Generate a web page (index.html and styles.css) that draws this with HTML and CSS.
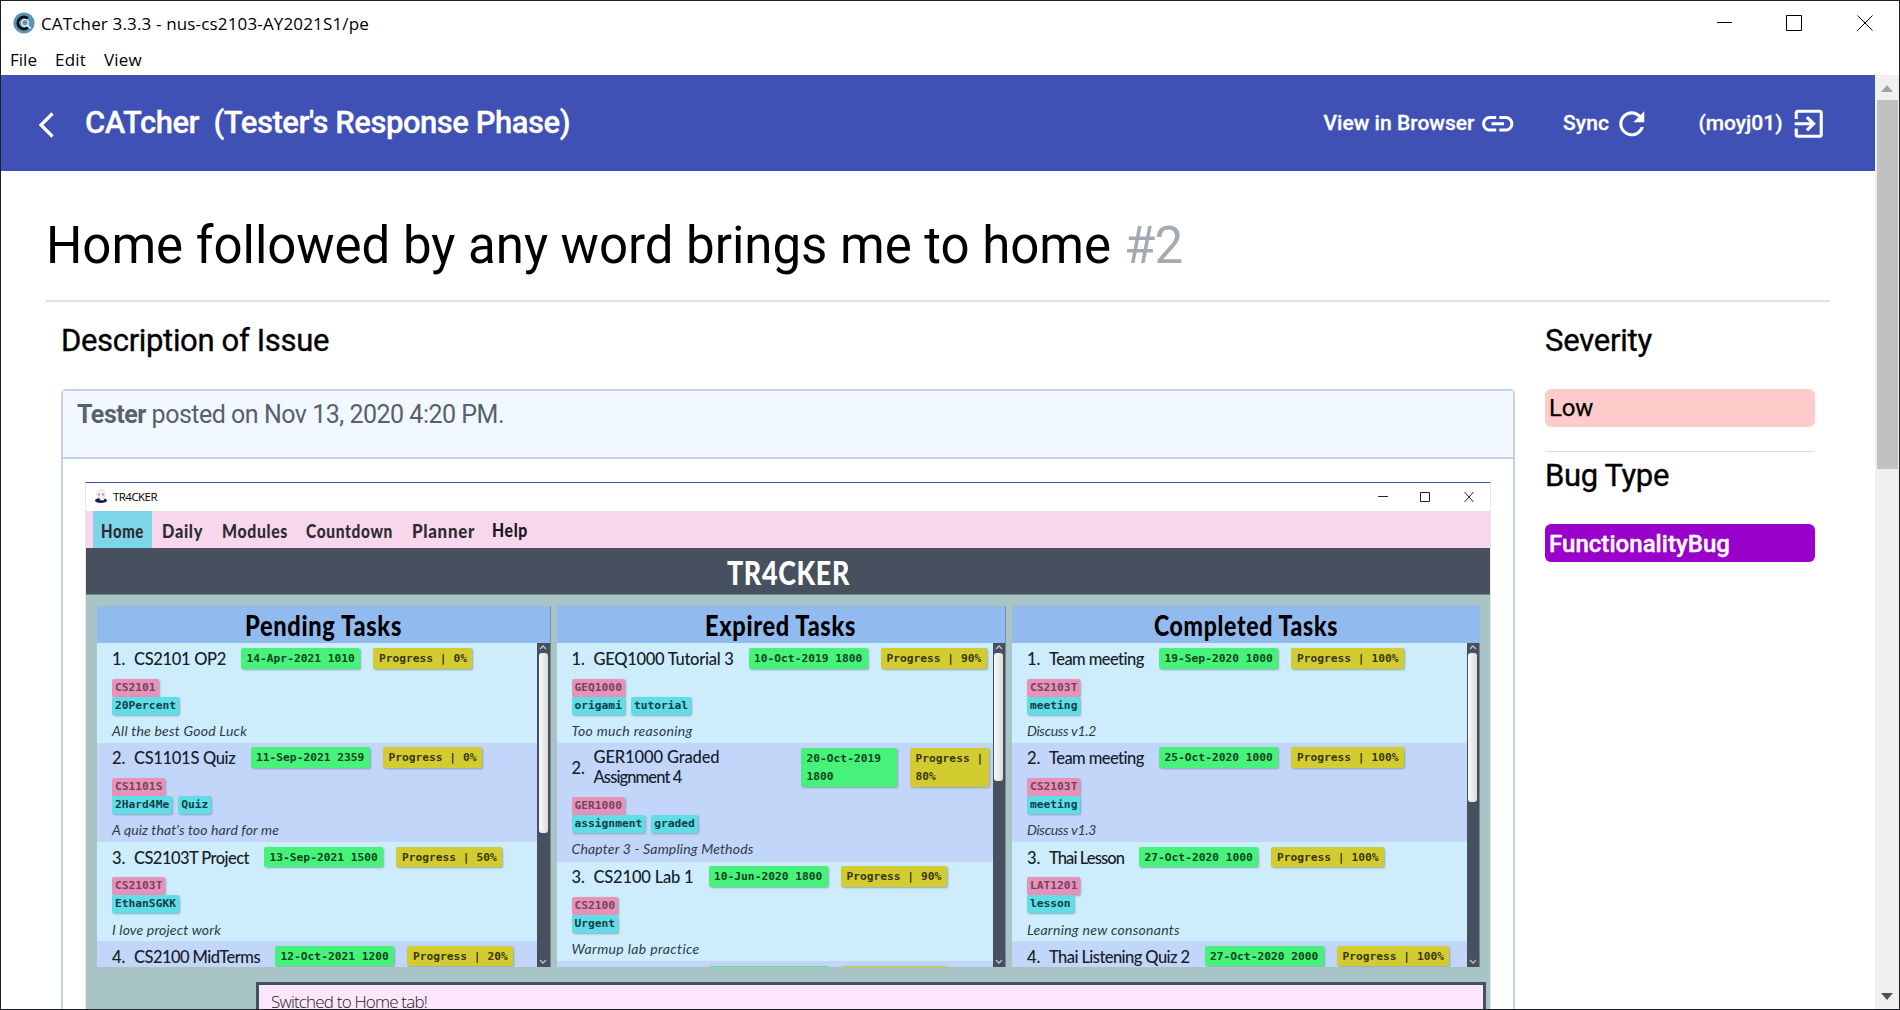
FILE: index.html
```html
<!DOCTYPE html>
<html lang="en">
<head>
<meta charset="utf-8">
<title>CATcher 3.3.3 - nus-cs2103-AY2021S1/pe</title>
<link rel="stylesheet" href="styles.css">
</head>
<body>
<div class="window">
  <header class="titlebar">
    <svg class="logo" viewBox="0 0 22 22"><circle cx="11" cy="11" r="10.6" fill="#5b95b5"/><path d="M14.800 6.500A6 6 0 1 0 14.800 15.500" fill="none" stroke="#0b0d12" stroke-width="2.800"/><circle cx="12" cy="10.800" r="3.300" fill="#5b95b5" stroke="#fff" stroke-width="1.200"/><path d="M14.400 13.200L17.600 16.400" stroke="#fff" stroke-width="1.400"/></svg>
    <span class="app-title" data-w="328">CATcher 3.3.3 - nus-cs2103-AY2021S1/pe</span>
    <svg class="win-buttons" viewBox="0 0 156 16" fill="none" stroke="#000"><path d="M0 7.5H15"/><path d="M69.5 .5h15v15h-15z"/><path d="M140.5 .5l15 15M155.5 .5l-15 15"/></svg>
  </header>
  <nav class="menubar"><span data-w="27">File</span><span data-w="31">Edit</span><span data-w="38">View</span></nav>
  <div class="viewport">
    <div class="page">
      <div class="toolbar">
        <svg class="back" viewBox="0 0 16 26"><path d="M14.5 1.5L3 13l11.500 11.500" fill="none" stroke="#fff" stroke-width="3.2"/></svg>
        <span class="brand" data-w="485">CATcher&nbsp; (Tester's Response Phase)</span>
        <span class="action view" data-w="151">View in Browser</span>
        <svg class="icon" viewBox="0 0 24 24"><path d="M3.900 12c0-1.710 1.390-3.100 3.100-3.100h4V7H7c-2.760 0-5 2.240-5 5s2.240 5 5 5h4v-1.900H7c-1.710 0-3.100-1.390-3.100-3.100zM8 13h8v-2H8v2zm9-6h-4v1.900h4c1.710 0 3.100 1.390 3.100 3.100s-1.390 3.100-3.100 3.100h-4V17h4c2.760 0 5-2.240 5-5s-2.240-5-5-5z"/></svg>
        <span class="action sync" data-w="46">Sync</span>
        <svg class="icon" viewBox="0 0 24 24"><path d="M17.650 6.350C16.200 4.900 14.210 4 12 4c-4.420 0-7.990 3.580-7.990 8s3.570 8 7.990 8c3.730 0 6.840-2.550 7.730-6h-2.080c-.820 2.330-3.040 4-5.650 4-3.310 0-6-2.690-6-6s2.690-6 6-6c1.660 0 3.140.690 4.220 1.780L13 11h7V4l-2.350 2.350z"/></svg>
        <span class="action user" data-w="84">(moyj01)</span>
        <svg class="icon" viewBox="0 0 24 24"><path d="M10.090 15.590L11.500 17l5-5-5-5-1.410 1.410L12.670 11H3v2h9.670l-2.580 2.590zM19 3H5c-1.110 0-2 .900-2 2v4h2V5h14v14H5v-4H3v4c0 1.100.890 2 2 2h14c1.100 0 2-.900 2-2V5c0-1.100-.900-2-2-2z"/></svg>
      </div>
      <div class="content">
        <h1><span data-w="1065">Home followed by any word brings me to home</span> <span class="num" data-w="58">#2</span></h1>
        <div class="columns">
          <main>
            <h2><span data-w="268">Description of Issue</span></h2>
            <article class="card">
              <div class="card-head"><span data-w="427"><b>Tester</b> posted on Nov 13, 2020 4:20 PM.</span></div>
              <div class="card-body">
                <div class="tracker">
                  <div class="t-title">
                    <svg class="t-logo" viewBox="0 0 14 15"><circle cx="7" cy="5" r="4.300" fill="#f4f0f2" stroke="#ccc" stroke-width=".6"/><path d="M5 4.500v2M9 4.500v2" stroke="#555"/><ellipse cx="7" cy="11.500" rx="6" ry="2.600" fill="#181b4d"/><ellipse cx="8" cy="9.500" rx="2.500" ry="2" fill="#eee"/></svg>
                    <span data-w="44">TR4CKER</span>
                    <svg class="t-buttons" viewBox="0 0 97 12" fill="none" stroke="#222"><path d="M0 5.500H10"/><path d="M42.500 1.500h9v9h-9z"/><path d="M86.500 1l9 10M95.500 1l-9 10"/></svg>
                  </div>
                  <nav class="t-menu"><span class="on"><i data-fit="43">Home</i></span><span><i data-fit="41">Daily</i></span><span><i data-fit="66">Modules</i></span><span><i data-fit="87">Countdown</i></span><span><i data-fit="63">Planner</i></span><span><i data-fit="36">Help</i></span></nav>
                  <div class="t-banner"><span data-fit="123">TR4CKER</span></div>
                  <div class="boards" id="boards"></div>
                  <div class="message"><span data-w="156">Switched to Home tab!</span></div>
                </div>
              </div>
            </article>
          </main>
          <aside>
            <h2><span data-w="107">Severity</span></h2>
            <div class="label low"><span data-w="44">Low</span></div>
            <hr>
            <h2 class="second"><span data-w="124">Bug Type</span></h2>
            <div class="label bug"><span data-w="181">FunctionalityBug</span></div>
          </aside>
        </div>
      </div>
    </div>
    <div class="scrollbar">
      <svg viewBox="0 0 12 7"><path d="M6 0l6 7H0z" fill="#a3a3a3"/></svg>
      <div class="thumb"></div>
      <svg viewBox="0 0 12 7"><path d="M6 7l6-7H0z" fill="#505050"/></svg>
    </div>
  </div>
</div>
<script src="app.js"></script>
</body>
</html>
```
FILE: styles.css
```css
* { box-sizing: border-box; }
body { margin: 0; font-family: Roboto, sans-serif; color: #000; background: #fff; }
svg { display: block; flex: none; }
span, i, b { white-space: nowrap; }
[data-w], [data-fit] { display: inline-block; }
[data-fit] { transform-origin: 0 50%; text-align: left; }
.window { width: 1900px; height: 1010px; border: 1px solid #1c1f26; display: flex; flex-direction: column; overflow: hidden; }
.titlebar { height: 44px; flex: none; display: flex; align-items: center; padding: 0 26px 0 12px; font: 17px/24px "Open Sans", sans-serif; }
.logo { width: 22px; height: 22px; margin-right: 6px; }
.app-title { margin-top: 1px; }
.win-buttons { width: 156px; height: 16px; margin-left: auto; }
.menubar { height: 30px; flex: none; display: flex; gap: 18px; padding: 3px 0 0 9px; font: 17px/24px "Open Sans", sans-serif; }
.viewport { flex: 1; display: flex; min-height: 0; }
.page { width: 1874px; overflow: hidden; }
.toolbar { height: 96px; background: #3f51b5; color: #fff; fill: #fff; display: flex; align-items: center; padding: 0 48px 0 37px; font-weight: 500; -webkit-text-stroke: .3px #fff; }
.back { width: 16px; height: 26px; margin: 4px 31px 0 0; }
.brand { font-size: 31px; margin: -2px auto 0 0; }
.action { font-size: 21px; line-height: 26px; }
.icon { width: 37.500px; height: 37.500px; margin-top: 2px; }
.view + .icon { margin-left: 4px; margin-right: 47px; }
.sync + .icon { margin-left: 4px; margin-right: 48px; }
.user + .icon { margin-left: 7px; }
.content { padding: 0 45px; }
h1 { margin: 0; height: 131px; border-bottom: 2px solid #e1e1e1; font-size: 51px; line-height: 60px; font-weight: 400; padding-top: 45px; display: flex; gap: 13px; }
.num { color: #a3aab1; }
.columns { display: flex; gap: 30px; padding: 0 15px; }
main { width: 1454px; }
aside { width: 270px; }
h2 { margin: 0; height: 87px; padding-top: 21px; font-size: 31px; line-height: 36px; font-weight: 400; -webkit-text-stroke: .35px #000; }
.card { border: 2px solid #c0d3eb; border-radius: 5px; height: 800px; }
.card-head { height: 68px; background: #f1f8ff; border-bottom: 2px solid #c0d3eb; color: #586069; font-size: 25px; line-height: 30px; padding: 9px 14px; }
.card-body { padding: 23px 22px; }
.label { height: 38px; border-radius: 6px; padding: 4px; font-size: 24px; line-height: 30px; }
.low { background: #ffcccb; -webkit-text-stroke: .25px #000; }
.bug { background: #90c; color: #fff; font-weight: 500; padding-top: 5px; -webkit-text-stroke: .4px #fff; }
hr { border: 0; border-top: 1px solid #dcdcdc; margin: 24px 0 0; }
h2.second { height: 72px; padding-top: 6px; }
.scrollbar { width: 24px; background: #f0f0f0; display: flex; flex-direction: column; align-items: center; padding: 10px 0 9px; }
.scrollbar svg { width: 12px; height: 7px; }
.thumb { width: 21px; height: 369px; background: #c1c1c1; margin: 8px 0 auto; }

.tracker { width: 1406px; height: 560px; border: 1px solid #e8e8e8; border-top: 1px solid #3f51b5; background: #a9c4c5; }
.t-title { height: 28px; background: #fff; display: flex; align-items: center; padding: 0 15px 1px 8px; font: 11.500px "Open Sans", sans-serif; }
.t-logo { width: 14px; height: 15px; margin-right: 5px; }
.t-buttons { width: 97px; height: 12px; margin-left: auto; }
.t-menu { height: 37px; background: #f8d7ec; display: flex; padding-left: 7px; color: #2b2b2f; }
.t-menu span { padding: 7px 0 0 9px; margin-right: 9.500px; }
.t-menu .on { background: #7dd5e8; padding-left: 8px; padding-right: 8px; margin-right: 1px; }
.t-menu span:last-child { margin-left: -1.500px; padding-top: 6px; color: #17171a; }
.t-menu i, .t-banner, .board h3 { font-family: Lato, sans-serif; font-weight: 900; font-style: normal; letter-spacing: .8px; }
.t-menu i { font-size: 19px; line-height: 26px; }
.t-banner { height: 47px; background: #47505f; color: #fff; font-size: 33px; line-height: 49px; text-align: center; border-bottom: 1px solid #7a8b93; }
.boards { display: flex; gap: 6px; height: 361px; margin: 11px 0 15px 11px; }
.board { height: 361px; overflow: hidden; }
.board h3 { margin: 0; height: 37px; background: #91bbef; text-align: center; font-size: 28px; line-height: 39px; border-right: 1.500px solid #78909c; }
.board:last-child h3 { border-right: 0; }
.board-body { display: flex; height: 324px; }
.list { flex: 1; overflow: hidden; min-width: 0; background: #cdecfc; padding-top: .5px; }
.row { height: 99.300px; background: #cdecfc; padding: 4.500px 0 0 15px; }
.row:nth-child(even) { background: #c2d6fa; }
.row.tall { height: 119px; padding-top: 5.500px; }
.line { display: flex; height: 21px; }
.tall .line { height: 39px; }
.no { width: 22px; flex: none; }
.no, .name { font: 500 16.500px/22px Lato, sans-serif; color: #14202a; }
.tall .no { line-height: 40px; }
.tall .name { width: 207.500px; line-height: 20px; margin-top: -1px; }
.chip, .tag { font-family: "DejaVu Sans Mono", monospace; font-weight: 700; font-size: 11.250px; border-radius: 2px; box-shadow: 1px 1px 2px #6f8a99aa; }
.chip { height: 20.500px; line-height: 21px; padding: 0 5.500px; margin-left: 13px; flex: none; }
.tall .chip { height: 38.500px; line-height: 18px; padding-top: 2px; white-space: pre; }
.date { background: #47f27a; color: #0d4420; }
.tall .date { width: 96px; }
.tall .prog { width: 79px; }
.prog { background: #d3cc30; color: #38370b; }
.tags { display: flex; gap: 6px; height: 18px; }
.tags.mod { margin-top: 9.500px; }
.tag { height: 18px; line-height: 18px; padding: 0 3px; }
.mod .tag { background: #e892b9; color: #71445d; }
.lab .tag { background: #60dde7; color: #123f45; }
.note { font: italic 14px/20px Lato, sans-serif; color: #2c3c46; padding-top: 6.500px; }
.bar { width: 13.500px; background: #47505f; display: flex; flex-direction: column; align-items: center; border-right: 1px solid #78868f; }
.bar svg { width: 8px; height: 5px; margin: 2px 0 3px; }
.bar .grip { width: 9px; background: linear-gradient(90deg, #fafafa, #dcdcdc); border-radius: 3px; margin-bottom: auto; }
.message { margin: 0 4px 0 170px; height: 80px; border: 3px solid #47505f; background: #fce6fb; padding: 4px 12px; font: 300 17px/26px "Open Sans", sans-serif; color: #222; }
```
FILE: app.js
```js
// name, name width, date, progress, module, tags, note, note width
const boards = [
  { title: 'Pending Tasks', titleW: 157, width: 453.5, grip: 180, rows: [
    ['CS2101 OP2', 92, '14-Apr-2021 1010', '0%', 'CS2101', ['20Percent'], 'All the best Good Luck', 135],
    ['CS1101S Quiz', 101.5, '11-Sep-2021 2359', '0%', 'CS1101S', ['2Hard4Me', 'Quiz'], "A quiz that's too hard for me", 167],
    ['CS2103T Project', 115, '13-Sep-2021 1500', '50%', 'CS2103T', ['EthanSGKK'], 'I love project work', 109],
    ['CS2100 MidTerms', 126, '12-Oct-2021 1200', '20%', 'CS2100', [], '', 0]
  ]},
  { title: 'Expired Tasks', titleW: 151, width: 449.5, grip: 128, rows: [
    ['GEQ1000 Tutorial 3', 140, '10-Oct-2019 1800', '90%', 'GEQ1000', ['origami', 'tutorial'], 'Too much reasoning', 121],
    ['GER1000 Graded\nAssignment 4', 127, '20-Oct-2019\n1800', '80%', 'GER1000', ['assignment', 'graded'], 'Chapter 3 - Sampling Methods', 182],
    ['CS2100 Lab 1', 100, '10-Jun-2020 1800', '90%', 'CS2100', ['Urgent'], 'Warmup lab practice', 128],
    ['', 100, '10-Jun-2020 1800', '90%', '', [], '', 0]
  ]},
  { title: 'Completed Tasks', titleW: 184, width: 468, grip: 149, rows: [
    ['Team meeting', 95, '19-Sep-2020 1000', '100%', 'CS2103T', ['meeting'], 'Discuss v1.2', 69],
    ['Team meeting', 95, '25-Oct-2020 1000', '100%', 'CS2103T', ['meeting'], 'Discuss v1.3', 69],
    ['Thai Lesson', 75, '27-Oct-2020 1000', '100%', 'LAT1201', ['lesson'], 'Learning new consonants', 153],
    ['Thai Listening Quiz 2', 140.5, '27-Oct-2020 2000', '100%', 'LAT1201', [], '', 0]
  ]}
];

function row(r, i) {
  const tall = r[0].includes('\n');
  const names = r[0].split('\n');
  const widths = tall ? [126, 88] : [r[1]];
  const name = names.map((n, k) => `<span data-w="${widths[k]}">${n}</span>`).join('<br>');
  const blank = !r[0];
  return `<div class="row${tall ? ' tall' : ''}"><div class="line"><div class="no">${blank ? '' : i + 1 + '.'}</div>` +
    `<div class="name"${tall ? '' : ` style="width:${r[1]}px"`}>${name}</div>` +
    `<div class="chip date" style="margin-left:${tall ? 0 : 15}px">${blank ? '&nbsp;'.repeat(16) : r[2]}</div>` +
    `<div class="chip prog">${blank ? '&nbsp;'.repeat(14) : 'Progress |' + (tall ? '\n' : ' ') + r[3]}</div></div>` +
    (r[4] && r[5].length ? `<div class="tags mod"><span class="tag">${r[4]}</span></div>` +
    `<div class="tags lab">${r[5].map(t => `<span class="tag">${t}</span>`).join('')}</div>` +
    `<div class="note"><span data-w="${r[7]}">${r[6]}</span></div>` : '') + '</div>';
}

document.getElementById('boards').innerHTML = boards.map(b =>
  `<section class="board" style="width:${b.width}px"><h3><span data-fit="${b.titleW}">${b.title}</span></h3>` +
  `<div class="board-body"><div class="list">${b.rows.map(row).join('')}</div>` +
  `<div class="bar"><svg viewBox="0 0 8 5"><path d="M1 4l3-3 3 3" fill="none" stroke="#bcc3c9" stroke-width="1.3"/></svg>` +
  `<div class="grip" style="height:${b.grip}px"></div>` +
  `<svg viewBox="0 0 8 5"><path d="M1 1l3 3 3-3" fill="none" stroke="#bcc3c9" stroke-width="1.3"/></svg></div></div></section>`).join('');

document.querySelectorAll('[data-w]').forEach(el => {
  const n = el.textContent.length;
  const w = el.getBoundingClientRect().width;
  if (n && w) el.style.letterSpacing = ((+el.dataset.w - w) / n).toFixed(3) + 'px';
});

// Display lettering is condensed rather than tracked.
document.querySelectorAll('[data-fit]').forEach(el => {
  const w = el.getBoundingClientRect().width;
  const target = +el.dataset.fit;
  el.style.width = target + 'px';
  el.style.transform = `scaleX(${(target / w).toFixed(4)})`;
});
```
